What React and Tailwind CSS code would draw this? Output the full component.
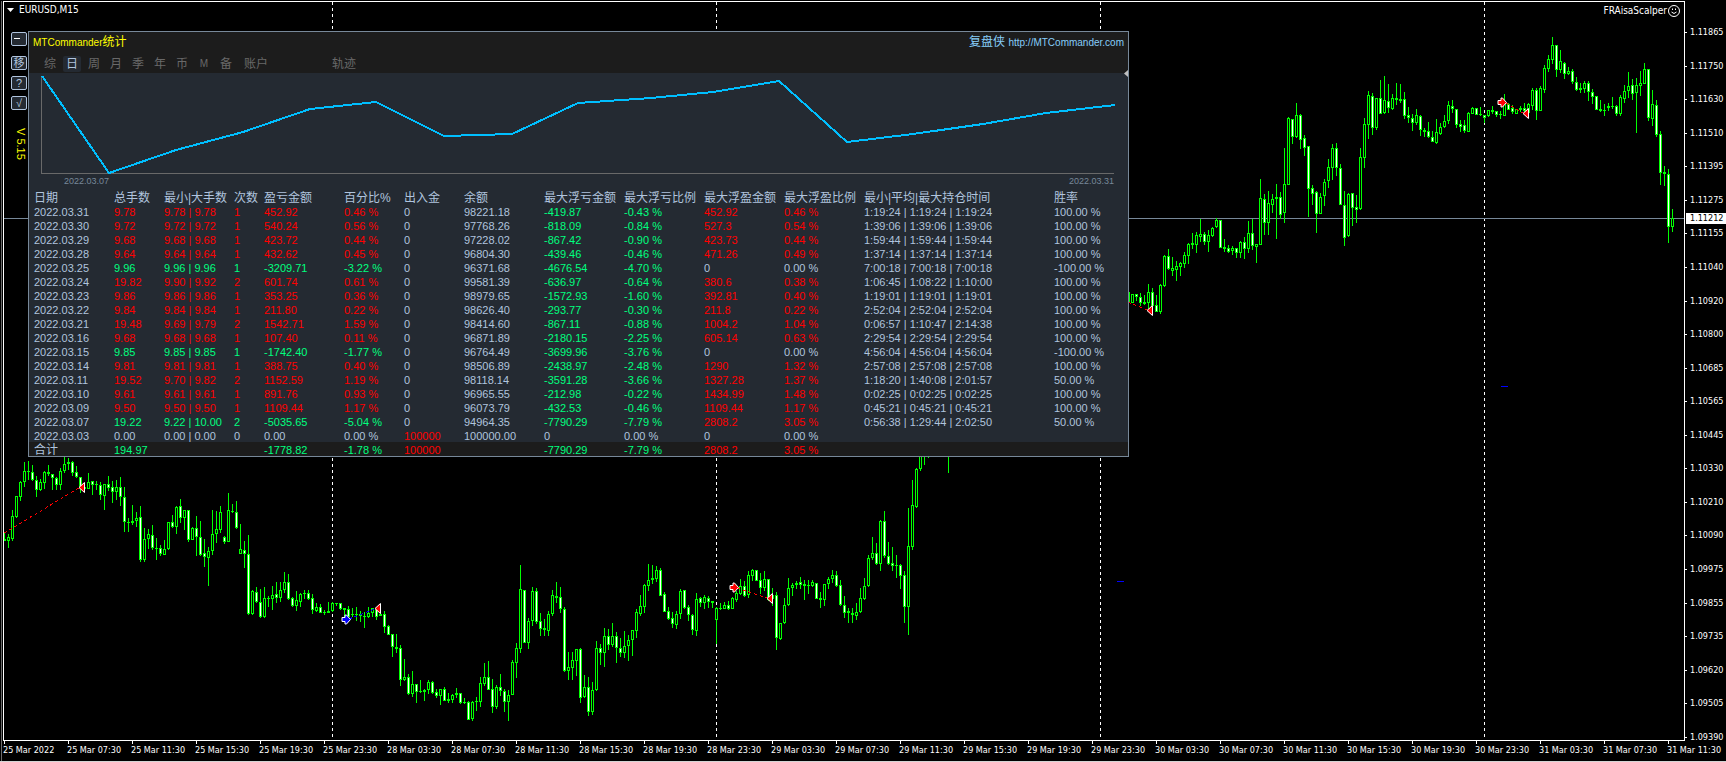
import clsx from 'clsx'

// [high, body top, body bottom, low, filled] per bar, 4px apart
const LEFT_BARS = [
  [532,539,541,541,1],[534,537,541,548,0],[510,516,539,541,0],[496,496,517,518,0],[481,482,497,501,0],[462,471,482,487,0],
  [461,471,472,480,0],[465,472,480,481,1],[476,480,490,497,1],[479,482,490,491,0],[471,472,483,489,0],[465,472,474,476,0],
  [474,474,478,490,1],[477,478,485,490,1],[468,471,485,490,0],[456,464,471,473,0],[458,462,464,470,0],[461,462,473,476,1],
  [466,472,477,478,1],[477,477,488,493,1],[483,487,489,489,1],[473,482,489,489,0],[481,481,485,495,1],[481,484,485,490,1],
  [482,485,495,500,1],[484,484,496,510,0],[476,484,488,491,1],[481,487,492,503,1],[480,487,492,500,0],[477,487,497,506,1],
  [487,497,522,532,1],[518,522,523,532,1],[505,521,523,525,0],[512,518,521,527,0],[506,517,560,562,1],[528,539,560,562,0],
  [529,534,539,549,0],[525,535,548,550,1],[538,548,549,560,1],[545,548,554,556,1],[540,549,555,555,0],[522,522,549,550,0],
  [515,522,527,528,1],[506,507,527,534,0],[499,506,518,523,1],[510,510,518,530,0],[510,510,540,542,1],[527,528,540,540,0],
  [516,528,537,556,1],[521,537,555,556,1],[539,553,557,567,1],[547,551,558,586,0],[510,534,551,555,0],[511,529,534,543,0],
  [506,512,530,533,0],[536,537,542,544,1],[493,510,542,542,0],[504,511,512,513,1],[501,512,528,529,1],[524,549,554,554,0],
  [541,550,554,568,1],[535,554,614,615,1],[590,591,614,615,0],[587,592,602,603,1],[589,602,617,618,1],[587,598,617,618,0],
  [596,598,599,607,0],[586,595,599,610,0],[582,594,598,603,1],[582,590,598,602,0],[572,582,590,593,0],[574,582,599,600,1],
  [597,598,606,607,1],[591,600,606,611,0],[593,594,602,607,0],[590,593,594,599,0],[590,593,599,600,1],[594,598,610,614,1],
  [603,607,611,612,0],[604,607,613,613,1],[610,612,613,615,0],[602,611,613,613,0],[602,603,611,612,0],[603,603,604,606,0],
  [603,603,609,610,1],[608,608,610,620,1],[606,609,617,622,1],[608,614,615,617,1],[607,614,615,621,1],[611,614,616,622,1],
  [612,616,617,628,1],[607,613,617,618,0],[608,608,613,617,0],[608,609,617,620,1],[610,614,616,616,1],[611,614,627,633,1],
  [625,626,635,635,1],[634,634,647,657,1],[634,647,649,653,1],[645,648,680,686,1],[659,677,680,681,0],[674,677,694,695,1],
  [671,684,694,697,0],[684,684,692,703,1],[680,691,692,693,0],[689,690,692,701,0],[680,682,690,694,0],[681,682,693,694,1],
  [689,692,696,698,1],[689,689,696,705,0],[687,689,701,701,1],[693,699,701,703,1],[694,695,700,703,0],[688,693,695,698,0],
  [693,693,703,704,1],[698,702,703,704,1],[701,702,720,720,1],[701,702,719,721,0],[697,701,702,711,0],[677,683,702,707,0],
  [663,677,684,686,0],[661,677,690,690,1],[679,689,707,713,1],[685,687,707,709,0],[674,687,691,696,1],[689,691,702,712,1],
  [690,695,702,721,0],[660,662,695,695,0],[643,648,663,678,0],[565,589,649,653,0],[590,590,643,643,1],[618,621,643,649,0],
  [587,591,621,626,0],[588,591,622,624,1],[613,621,629,636,1],[619,628,630,636,1],[611,614,631,636,0],[590,595,614,616,0],
  [582,596,598,603,1],[587,597,609,613,1],[607,609,671,672,1],[652,667,671,680,0],[652,660,668,680,0],[649,649,661,676,0],
  [648,649,698,703,1],[675,687,697,698,0],[677,687,712,716,1],[682,690,712,715,0],[641,648,690,691,0],[644,648,653,665,1],
  [628,636,653,667,0],[629,636,645,650,1],[623,636,645,647,0],[632,636,648,663,1],[638,648,653,657,1],[631,646,653,658,0],
  [635,640,646,661,0],[630,630,640,656,0],[609,612,631,638,0],[595,606,614,616,0],[584,585,607,613,0],[564,580,586,591,0],
  [565,578,580,584,0],[566,570,579,582,0],[568,570,596,596,1],[592,594,612,612,1],[607,611,619,620,1],[612,618,624,628,1],
  [611,614,625,629,0],[589,591,614,619,0],[590,590,608,609,1],[605,607,615,621,1],[614,615,630,635,1],[593,599,631,636,0],
  [597,598,603,607,1],[595,597,603,609,0],[596,598,602,608,1],[601,601,603,608,1],[607,608,620,644,0],[603,608,609,610,0],
  [602,605,609,609,0],[601,605,609,610,1],[597,598,609,609,0],[591,593,600,602,0],[579,586,594,595,0],[581,586,596,597,1],
  [571,575,595,598,0],[569,570,576,581,0],[570,570,581,581,1],[573,580,588,594,1],[571,579,588,591,0],[579,579,600,601,1],
  [588,595,599,606,0],[592,595,638,650,1],[623,623,639,640,0],[598,605,623,624,0],[578,588,605,606,0],[583,585,588,596,0],
  [581,583,585,589,0],[577,582,585,589,1],[580,584,586,600,1],[580,585,586,594,0],[580,582,586,587,0],[583,583,599,599,1],
  [592,598,600,608,1],[584,584,600,606,0],[577,579,584,589,0],[570,575,579,583,0],[571,575,586,587,1],[580,585,605,606,1],
  [596,605,613,618,1],[608,611,613,623,1],[608,613,615,623,1],[603,612,616,620,0],[588,598,612,613,0],[578,586,599,600,0],
  [555,558,586,587,0],[537,553,558,560,0],[543,553,564,565,1],[520,521,564,571,0],[511,521,556,558,1],[542,556,564,565,1],
  [547,563,566,571,1],[555,565,566,578,1],[564,565,576,589,1],[571,575,607,623,1],[508,546,607,635,0],[480,505,547,550,0],
  [468,469,507,508,0],[450,450,469,471,0],[450,450,457,465,1],[452,453,456,458,0],
]

const RIGHT_BARS = [
  [292,292,303,303,0],[294,294,303,303,0],[294,294,297,301,1],[293,297,303,306,1],[295,302,304,305,1],[284,292,303,312,0],
  [288,292,306,308,1],[295,305,312,312,1],[284,285,312,314,0],[255,256,286,287,0],[249,256,269,270,1],[257,268,271,276,0],
  [261,266,270,281,0],[262,263,267,276,0],[252,255,264,268,0],[243,244,256,264,0],[233,243,245,249,1],[232,235,245,253,0],
  [219,234,237,242,0],[232,234,242,245,1],[230,235,242,252,0],[227,228,236,237,0],[218,220,227,228,0],[220,220,248,248,1],
  [239,247,249,252,1],[245,248,252,253,1],[246,248,251,255,0],[248,248,253,258,1],[241,242,253,258,0],[237,242,249,259,1],
  [221,233,249,253,0],[219,233,246,250,1],[244,244,247,263,0],[179,198,245,245,0],[194,199,223,235,1],[191,203,223,235,0],
  [194,199,205,213,0],[184,197,199,239,0],[192,197,215,219,1],[148,184,213,223,0],[117,118,185,185,0],[119,119,137,144,1],
  [103,115,137,138,0],[114,115,140,149,1],[135,138,148,156,1],[146,146,189,217,1],[185,188,194,205,1],[191,192,214,233,1],
  [193,197,214,214,0],[179,182,196,206,0],[159,167,181,188,0],[144,148,168,180,0],[143,148,168,176,1],[164,168,205,205,1],
  [191,205,238,246,1],[193,194,236,237,0],[193,193,208,226,1],[195,207,210,223,1],[148,157,209,210,0],[118,124,158,168,0],
  [91,95,125,139,0],[93,96,128,135,1],[98,98,128,130,0],[80,98,114,114,1],[76,100,113,114,0],[84,101,108,113,1],
  [94,98,109,110,0],[83,98,100,105,1],[84,99,101,103,1],[92,99,116,119,1],[107,115,118,123,1],[114,118,123,131,1],
  [109,115,123,125,0],[115,116,130,136,1],[128,130,132,137,1],[122,131,137,138,1],[131,137,142,142,1],[119,132,143,144,0],
  [123,127,134,135,0],[115,121,127,128,0],[101,105,121,124,0],[100,106,109,113,1],[109,109,125,128,1],[120,124,127,132,1],
  [120,125,131,133,1],[112,113,132,132,0],[107,108,114,114,0],[108,108,115,115,1],[107,114,115,116,1],[115,115,118,123,1],
  [110,110,116,117,0],[106,110,112,114,0],[111,111,115,117,1],[111,114,115,119,1],[94,103,116,116,0],[103,104,110,110,1],
  [105,108,112,114,1],[109,109,114,114,0],[106,108,110,112,0],[103,108,111,115,1],[103,104,113,116,0],[88,90,106,110,0],
  [88,90,111,120,1],[86,88,111,111,0],[65,68,90,93,0],[55,59,69,72,0],[37,45,60,64,0],[45,45,70,77,1],
  [50,61,70,73,0],[62,63,74,79,1],[67,71,74,75,0],[69,71,82,84,1],[77,82,90,91,1],[83,88,90,93,1],
  [81,83,89,93,0],[81,83,92,101,1],[89,92,97,104,1],[96,96,110,110,1],[100,109,111,112,1],[104,110,111,116,1],
  [103,106,108,111,0],[97,106,107,109,0],[105,106,114,116,1],[95,97,114,116,0],[85,91,99,103,0],[72,86,91,98,0],
  [79,85,94,100,1],[78,85,93,133,0],[71,83,86,96,0],[63,69,84,84,0],[69,69,118,121,1],[90,104,119,126,0],
  [100,105,135,137,1],[131,134,173,185,1],[166,172,174,186,1],[169,174,227,243,1],[209,218,227,232,0],
]

const PRICES = [
  '1.11865', '1.11750', '1.11630', '1.11510', '1.11395', '1.11275', '1.11155', '1.11040', '1.10920', '1.10800', '1.10685',
  '1.10565', '1.10445', '1.10330', '1.10210', '1.10090', '1.09975', '1.09855', '1.09735', '1.09620', '1.09505', '1.09390',
]

const TIMES = [
  '25 Mar 2022', '25 Mar 07:30', '25 Mar 11:30', '25 Mar 15:30', '25 Mar 19:30', '25 Mar 23:30',
  '28 Mar 03:30', '28 Mar 07:30', '28 Mar 11:30', '28 Mar 15:30', '28 Mar 19:30', '28 Mar 23:30',
  '29 Mar 03:30', '29 Mar 07:30', '29 Mar 11:30', '29 Mar 15:30', '29 Mar 19:30', '29 Mar 23:30',
  '30 Mar 03:30', '30 Mar 07:30', '30 Mar 11:30', '30 Mar 15:30', '30 Mar 19:30', '30 Mar 23:30',
  '31 Mar 03:30', '31 Mar 07:30', '31 Mar 11:30',
]

const COLUMNS = [
  ['日期', 'w-[80px]'],
  ['总手数', 'w-[50px]'],
  ['最小|大手数', 'w-[70px]'],
  ['次数', 'w-[30px]'],
  ['盈亏金额', 'w-[80px]'],
  ['百分比%', 'w-[60px]'],
  ['出入金', 'w-[60px]'],
  ['余额', 'w-[80px]'],
  ['最大浮亏金额', 'w-[80px]'],
  ['最大浮亏比例', 'w-[80px]'],
  ['最大浮盈金额', 'w-[80px]'],
  ['最大浮盈比例', 'w-[80px]'],
  ['最小|平均|最大持仓时间', 'w-[190px]'],
  ['胜率', 'w-[79px]'],
]

const ROWS = [
  ['2022.03.31', '9.78', '9.78 | 9.78', '1', '452.92', '0.46 %', '0', '98221.18', '-419.87', '-0.43 %', '452.92', '0.46 %', '1:19:24 | 1:19:24 | 1:19:24', '100.00 %'],
  ['2022.03.30', '9.72', '9.72 | 9.72', '1', '540.24', '0.56 %', '0', '97768.26', '-818.09', '-0.84 %', '527.3', '0.54 %', '1:39:06 | 1:39:06 | 1:39:06', '100.00 %'],
  ['2022.03.29', '9.68', '9.68 | 9.68', '1', '423.72', '0.44 %', '0', '97228.02', '-867.42', '-0.90 %', '423.73', '0.44 %', '1:59:44 | 1:59:44 | 1:59:44', '100.00 %'],
  ['2022.03.28', '9.64', '9.64 | 9.64', '1', '432.62', '0.45 %', '0', '96804.30', '-439.46', '-0.46 %', '471.26', '0.49 %', '1:37:14 | 1:37:14 | 1:37:14', '100.00 %'],
  ['2022.03.25', '9.96', '9.96 | 9.96', '1', '-3209.71', '-3.22 %', '0', '96371.68', '-4676.54', '-4.70 %', '0', '0.00 %', '7:00:18 | 7:00:18 | 7:00:18', '-100.00 %'],
  ['2022.03.24', '19.82', '9.90 | 9.92', '2', '601.74', '0.61 %', '0', '99581.39', '-636.97', '-0.64 %', '380.6', '0.38 %', '1:06:45 | 1:08:22 | 1:10:00', '100.00 %'],
  ['2022.03.23', '9.86', '9.86 | 9.86', '1', '353.25', '0.36 %', '0', '98979.65', '-1572.93', '-1.60 %', '392.81', '0.40 %', '1:19:01 | 1:19:01 | 1:19:01', '100.00 %'],
  ['2022.03.22', '9.84', '9.84 | 9.84', '1', '211.80', '0.22 %', '0', '98626.40', '-293.77', '-0.30 %', '211.8', '0.22 %', '2:52:04 | 2:52:04 | 2:52:04', '100.00 %'],
  ['2022.03.21', '19.48', '9.69 | 9.79', '2', '1542.71', '1.59 %', '0', '98414.60', '-867.11', '-0.88 %', '1004.2', '1.04 %', '0:06:57 | 1:10:47 | 2:14:38', '100.00 %'],
  ['2022.03.16', '9.68', '9.68 | 9.68', '1', '107.40', '0.11 %', '0', '96871.89', '-2180.15', '-2.25 %', '605.14', '0.63 %', '2:29:54 | 2:29:54 | 2:29:54', '100.00 %'],
  ['2022.03.15', '9.85', '9.85 | 9.85', '1', '-1742.40', '-1.77 %', '0', '96764.49', '-3699.96', '-3.76 %', '0', '0.00 %', '4:56:04 | 4:56:04 | 4:56:04', '-100.00 %'],
  ['2022.03.14', '9.81', '9.81 | 9.81', '1', '388.75', '0.40 %', '0', '98506.89', '-2438.97', '-2.48 %', '1290', '1.32 %', '2:57:08 | 2:57:08 | 2:57:08', '100.00 %'],
  ['2022.03.11', '19.52', '9.70 | 9.82', '2', '1152.59', '1.19 %', '0', '98118.14', '-3591.28', '-3.66 %', '1327.28', '1.37 %', '1:18:20 | 1:40:08 | 2:01:57', '50.00 %'],
  ['2022.03.10', '9.61', '9.61 | 9.61', '1', '891.76', '0.93 %', '0', '96965.55', '-212.98', '-0.22 %', '1434.99', '1.48 %', '0:02:25 | 0:02:25 | 0:02:25', '100.00 %'],
  ['2022.03.09', '9.50', '9.50 | 9.50', '1', '1109.44', '1.17 %', '0', '96073.79', '-432.53', '-0.46 %', '1109.44', '1.17 %', '0:45:21 | 0:45:21 | 0:45:21', '100.00 %'],
  ['2022.03.07', '19.22', '9.22 | 10.00', '2', '-5035.65', '-5.04 %', '0', '94964.35', '-7790.29', '-7.79 %', '2808.2', '3.05 %', '0:56:38 | 1:29:44 | 2:02:50', '50.00 %'],
  ['2022.03.03', '0.00', '0.00 | 0.00', '0', '0.00', '0.00 %', '100000', '100000.00', '0', '0.00 %', '0', '0.00 %', '', ''],
]

const TOTAL = ['合计', '194.97', '', '', '-1778.82', '-1.78 %', '100000', '', '-7790.29', '-7.79 %', '2808.2', '3.05 %', '', '']

const TABS = ['综', '日', '周', '月', '季', '年', '币', 'M', '备']

const PLAIN = 'text-[#b0c4de]'
const CELL = 'pt-0.5 pr-0 pb-0 pl-[5px]'

function signColor(value) {
  const n = parseFloat(value)
  if (n > 0) return 'text-[#f00]'
  if (n < 0) return 'text-[#00ff7f]'
  return PLAIN
}

// lots, count, profit and percent follow the day's profit
function cellColor(row, i) {
  if (i >= 1 && i <= 5) return signColor(row[4])
  if (i === 6 || (i >= 8 && i <= 11)) return signColor(row[i])
  return PLAIN
}

function Bars({ bars, start }) {
  return bars.map(([h, t, b, l, filled], i) => {
    const x = start + i * 4
    return (
      <g key={x}>
        <rect x={x} y={h} width="1" height={Math.max(l - h, 1)} fill="#0f0" />
        <rect x={x - 1} y={t} width="3" height={Math.max(b - t, 1)} fill="#0f0" />
        {b - t > 2 && <rect x={x} y={t + 1} width="1" height={b - t - 2} fill={filled ? '#fff' : '#000'} />}
      </g>
    )
  })
}

function Entry({ x, y, color }) {
  return <path d={`M${x} ${y - 2}h3v-2.5h1.5l4 4.5l-4 4.5h-1.5v-2.5h-3z`} fill={color} stroke="#fff" strokeWidth="1" />
}

function Exit({ x, y }) {
  return (
    <g>
      <path d={`M${x} ${y}l5 -5v10z`} fill="#f00" />
      <path d={`M${x} ${y}l5.500 -5v10z`} fill="none" stroke="#fff" strokeWidth="1" />
    </g>
  )
}

function CandleChart() {
  return (
    <svg className="absolute inset-0 h-full w-full" viewBox="4 2 1680 738" preserveAspectRatio="none" aria-hidden="true">
      <g shapeRendering="crispEdges">
        {[332, 716, 1100, 1484].map((x) => (
          <line key={x} x1={x + 0.5} x2={x + 0.5} y1="2" y2="740" stroke="#fff" strokeDasharray="3 3" />
        ))}
        <rect x="4" y="218" width="1680" height="1" fill="#778899" />
        <Bars bars={LEFT_BARS} start={4} />
        <rect x="948" y="450" width="1" height="23" fill="#0f0" />
        <Bars bars={RIGHT_BARS} start={1128} />
        <rect x="1117" y="581" width="7" height="1" fill="#00f" />
        <rect x="1501" y="386" width="7" height="1" fill="#00f" />
      </g>
      <g strokeWidth="1" strokeDasharray="3 3" shapeRendering="crispEdges">
        <line x1="4" y1="533" x2="79" y2="488" stroke="#f00" />
        <line x1="349" y1="619" x2="375" y2="609" stroke="#00f" />
        <line x1="737" y1="588" x2="767" y2="598" stroke="#f00" />
        <line x1="1128" y1="302" x2="1147" y2="310" stroke="#f00" />
        <line x1="1506" y1="103" x2="1523" y2="113" stroke="#f00" />
      </g>
      <Exit x={79} y={487.5} />
      <Exit x={375} y={608.5} />
      <Exit x={767} y={598.5} />
      <Exit x={1147} y={310.5} />
      <Exit x={1523} y={113.5} />
      <Entry x={342} y={619.5} color="#00f" />
      <Entry x={730} y={587.5} color="#f00" />
      <Entry x={1498} y={102.5} color="#f00" />
    </svg>
  )
}

function RailButton({ label, className, children }) {
  return (
    <button
      aria-label={label}
      className={clsx(
        'flex h-[14px] w-4 items-center justify-center overflow-hidden rounded-[2px] border border-[#b0c4de] bg-[#242a32] text-[11px] leading-none text-[#b0c4de]',
        className
      )}
    >
      {children}
    </button>
  )
}

function Rail() {
  return (
    <div className="mr-px flex w-4 flex-col gap-1.5 pt-px">
      <RailButton label="最小化" className="mb-1">
        <span className="mr-1 mb-0.5 h-px w-1.5 bg-white" />
      </RailButton>
      <RailButton>移</RailButton>
      <RailButton>?</RailButton>
      <RailButton>√</RailButton>
      <div className="mt-3 w-5 text-[11px] leading-5 text-[#ff0] [writing-mode:vertical-rl]">V 5.15</div>
    </div>
  )
}

function StatsPanel() {
  return (
    <div className="relative border border-[#778899] bg-[#242a32]">
      <div className="bg-[#1c1c1c] pb-px">
        <div className="flex h-5 items-center justify-between px-1 text-xs">
          <h1 className="text-[#ff0]">
            <span className="text-[10px]">MTCommander</span>统计
          </h1>
          <a href="#site" className="text-[#87cefa]">
            复盘侠 <span className="text-[10px]">http://MTCommander.com</span>
          </a>
        </div>
        <nav className="mt-1 flex h-4 gap-1 pl-3 text-xs leading-4 text-[#696969]">
          {TABS.map((tab) => (
            <button
              key={tab}
              className={clsx('w-[18px] rounded-[2px]', tab === '日' && 'bg-[#242a32] text-[#b0c4de]', tab === 'M' && 'text-[10px]')}
            >
              {tab}
            </button>
          ))}
          <button className="w-[34px]">账户</button>
          <button className="ml-[50px] w-[34px]">轨迹</button>
        </nav>
      </div>

      <svg className="block h-[101px] w-full" viewBox="29 73 1099 101" preserveAspectRatio="none" shapeRendering="crispEdges" aria-hidden="true">
        <path d="M41.500 76V173.500H1114" fill="none" stroke="#696969" />
        <polyline
          points="42,76 109,173 176,150 243,132 310,109 376,102 444,136 512,134 578,103 651,98 713,92 779,81 847,142 913,134 983,124 1046,113 1115,105"
          fill="none"
          stroke="#00bfff"
          strokeWidth="2"
        />
      </svg>
      <div className="flex h-4 justify-between pr-[14px] pl-[35px] text-[9px] leading-[14px] text-[#778899]">
        <span>2022.03.07</span>
        <span>2022.03.31</span>
      </div>

      <table className="table-fixed border-collapse text-left text-[11px] leading-[12px] whitespace-nowrap">
        <thead>
          <tr className="h-[14px] text-xs leading-[12px] text-[#b0c4de]">
            {COLUMNS.map(([name, width]) => (
              <th key={name} className={clsx('font-normal', CELL, width)}>{name}</th>
            ))}
          </tr>
        </thead>
        <tbody>
          {ROWS.map((row) => (
            <tr key={row[0]} className="h-[14px]">
              {row.map((cell, i) => (
                <td key={i} className={clsx(CELL, cellColor(row, i))}>{cell}</td>
              ))}
            </tr>
          ))}
        </tbody>
        <tfoot>
          <tr className="h-[14px] bg-[#1c1c1c]">
            {TOTAL.map((cell, i) => (
              <td key={i} className={clsx(CELL, i === 0 && 'text-xs leading-[12px]', cellColor(TOTAL, i))}>{cell}</td>
            ))}
          </tr>
        </tfoot>
      </table>

      <svg className="absolute top-[38px] right-0 h-[7px] w-1" viewBox="0 0 4 7" aria-hidden="true">
        <path d="M4 0v7L0 3.500z" fill="#c0c0c0" />
      </svg>
    </div>
  )
}

function PriceAxis() {
  return (
    <aside className="relative -mb-0.5 flex w-[41px] flex-col justify-between pt-[26px] text-[9px] leading-[11px]">
      {PRICES.map((price) => (
        <div key={price} className="flex items-center">
          <span className="mr-[3px] h-px w-0.5 bg-white" />
          {price}
        </div>
      ))}
      <div className="absolute top-[212px] right-0 left-px bg-white pl-1 text-black">1.11212</div>
    </aside>
  )
}

function TimeAxis() {
  return (
    <footer className="flex h-5 overflow-hidden text-[9px] leading-[12px] whitespace-nowrap">
      {TIMES.map((time) => (
        <div key={time} className="w-16 shrink-0">
          <div className="ml-px h-[3px] w-px bg-white" />
          <div>{time}</div>
        </div>
      ))}
    </footer>
  )
}

export default function App() {
  return (
    <div className="flex min-h-screen flex-col border-b border-[#d4d4d4] bg-black pt-px pl-px font-['DejaVu_Sans_Condensed','DejaVu_Sans',sans-serif] text-white">
      <div className="flex flex-1 flex-col border-l border-[#6b6b6b] pl-px">
        <div className="flex flex-1">
          <main className="relative flex-1 border border-white">
            <CandleChart />
            <div className="relative flex h-[29px] items-start justify-between pr-1 pl-[3px] text-[10px] leading-[15px]">
              <div className="flex items-center gap-[5px]">
                <svg className="h-1 w-[7px]" viewBox="0 0 7 4" aria-hidden="true">
                  <path d="M0 0h7L3.500 4z" fill="#fff" />
                </svg>
                EURUSD,M15
              </div>
              <div className="flex items-center gap-px pt-px">
                FRAisaScalper
                <svg className="h-3 w-3" viewBox="0 0 12 12" fill="none" stroke="#fff" aria-hidden="true">
                  <circle cx="6" cy="6" r="5.500" />
                  <path d="M3.500 7q2.500 3 5 0" />
                  <path d="M4.500 3.500v1.500M7.500 3.500v1.500" />
                </svg>
              </div>
            </div>
            <div className="relative flex items-start pl-[7px] font-['Liberation_Sans','Noto_Sans_CJK_SC',sans-serif]">
              <Rail />
              <StatsPanel />
            </div>
          </main>
          <PriceAxis />
        </div>
        <TimeAxis />
      </div>
    </div>
  )
}
